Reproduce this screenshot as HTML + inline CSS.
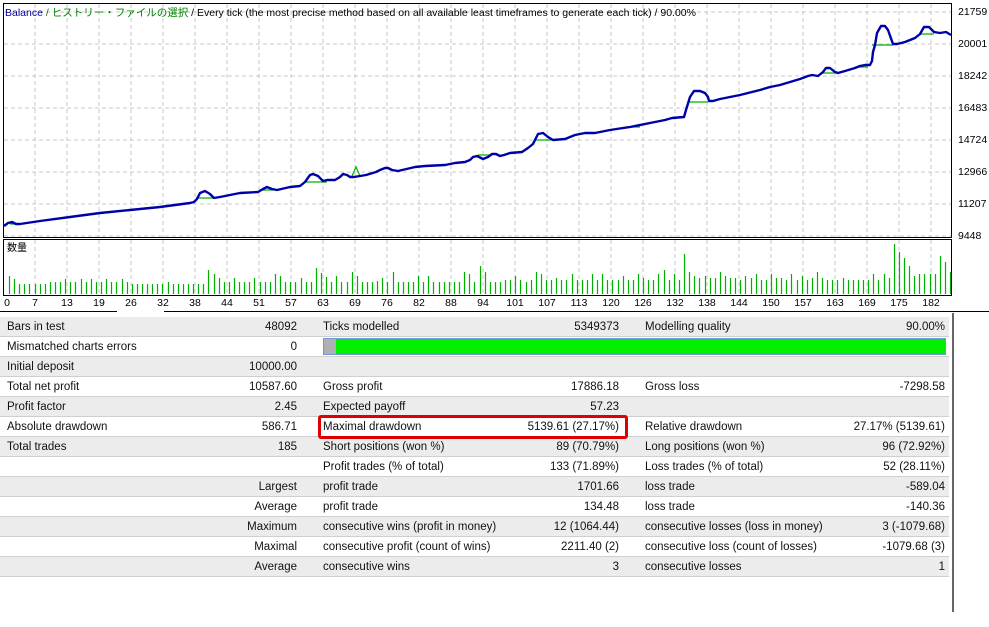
<!DOCTYPE html>
<html><head><meta charset="utf-8"><style>
body{margin:0;width:989px;height:627px;background:#fff;position:relative;overflow:hidden;font-family:"Liberation Sans","Noto Sans CJK JP",sans-serif;}
.t{position:absolute;left:0;top:317px;width:949px;}
.r{position:absolute;left:0;width:949px;height:19px;border-bottom:1px solid #cfcfcf;font-size:11.5px;line-height:20px;color:#111;}
.g{background:#ececec;}
.r span{position:absolute;white-space:nowrap;}
.l1{left:7px}.v1{right:652px}.l2{left:323px}.v2{right:330px}.l3{left:645px}.v3{right:4px}
</style></head><body>
<svg width="989" height="312" style="position:absolute;left:0;top:0" font-family="Liberation Sans, sans-serif">
<g id="grid" stroke="#c8c8c8" stroke-dasharray="4,3" stroke-width="1"></g>
<rect x="3.5" y="3.5" width="948" height="234" fill="none" stroke="#000"/>
<rect x="3.5" y="239.5" width="948" height="56" fill="none" stroke="#000"/>
<g id="vol" stroke="#00b000" stroke-width="1.2"></g>
<g stroke="#00b000" stroke-width="1.2" fill="none">
<path d="M196 198H214M262 190H275M305 182H327M352 176L356 167L360 176M478 155H491M535 140H553M688 102H708M822 73H838M872 45H893M920 34H934M10 224H20M855 67H868M625 127H640"/>
</g>
<polyline fill="none" stroke="#0000a8" stroke-width="2.4" stroke-linejoin="round" points="4,226 8,223 12,222 16,224 20,224 40,221 70,217 100,213 130,210 160,207 190,203 194,202 197,199 200,193 205,191 210,194 214,198 220,197 225,196 240,193 258,192 263,189 267,187 272,189 277,190 290,187 300,186 305,182 310,175 313,174 318,176 323,181 327,180 335,180 340,177 343,174 347,175 350,177 354,177 360,176 366,175 376,172 380,170 385,168 388,168 392,170 398,171 415,167 425,166 445,165 455,163 465,162 470,160 473,157 477,156 481,158 483,159 488,157 492,154 496,154 500,156 504,155 510,153 522,152 528,148 533,144 538,134 543,133 548,137 553,140 565,139 575,135 585,133 595,133 610,130 630,127 650,123 665,120 672,118 684,117 686,110 690,97 694,91 700,91 705,93 708,97 709,101 713,101 720,99 740,95 760,90 770,87 780,85 790,82 800,79 808,76 812,75 818,76 823,72 826,68 830,68 835,72 838,73 845,71 855,68 860,66 865,65 870,65 872,61 873,52 875,45 877,33 881,26 885,26 888,30 893,44 897,44 905,42 915,38 920,34 924,27 929,27 934,32 940,33 946,32 951,35"/>
<text x="5" y="16" font-size="10.5"><tspan fill="#0000a0">Balance</tspan><tspan fill="#008000"> / ヒストリー・ファイルの選択</tspan><tspan fill="#000"> / Every tick (the most precise method based on all available least timeframes to generate each tick) / 90.00%</tspan></text>
<g font-size="10.5" fill="#000">
<text x="958" y="15">21759</text><text x="958" y="47">20001</text><text x="958" y="79">18242</text><text x="958" y="111">16483</text><text x="958" y="143">14724</text><text x="958" y="175">12966</text><text x="958" y="207">11207</text><text x="958" y="239">9448</text>
</g>
<text x="7" y="251" font-size="10" fill="#000" font-family="Noto Sans CJK JP, sans-serif">数量</text>
<g id="xl" font-size="10.5" fill="#000" text-anchor="middle"></g>
<path d="M0 311.5H117M164 311.5H989" stroke="#000" stroke-width="1"/>
</svg>
<div style="position:absolute;left:952px;top:313px;width:2px;height:299px;background:#666"></div>
<div class="t">
<div class="r g" style="top:0"><span class="l1">Bars in test</span><span class="v1">48092</span><span class="l2">Ticks modelled</span><span class="v2">5349373</span><span class="l3">Modelling quality</span><span class="v3">90.00%</span></div>
<div class="r" style="top:20px"><span class="l1">Mismatched charts errors</span><span class="v1">0</span></div>
<div class="r g" style="top:40px"><span class="l1">Initial deposit</span><span class="v1">10000.00</span></div>
<div class="r" style="top:60px"><span class="l1">Total net profit</span><span class="v1">10587.60</span><span class="l2">Gross profit</span><span class="v2">17886.18</span><span class="l3">Gross loss</span><span class="v3">-7298.58</span></div>
<div class="r g" style="top:80px"><span class="l1">Profit factor</span><span class="v1">2.45</span><span class="l2">Expected payoff</span><span class="v2">57.23</span></div>
<div class="r" style="top:100px"><span class="l1">Absolute drawdown</span><span class="v1">586.71</span><span class="l2">Maximal drawdown</span><span class="v2">5139.61 (27.17%)</span><span class="l3">Relative drawdown</span><span class="v3">27.17% (5139.61)</span></div>
<div class="r g" style="top:120px"><span class="l1">Total trades</span><span class="v1">185</span><span class="l2">Short positions (won %)</span><span class="v2">89 (70.79%)</span><span class="l3">Long positions (won %)</span><span class="v3">96 (72.92%)</span></div>
<div class="r" style="top:140px"><span class="l2">Profit trades (% of total)</span><span class="v2">133 (71.89%)</span><span class="l3">Loss trades (% of total)</span><span class="v3">52 (28.11%)</span></div>
<div class="r g" style="top:160px"><span class="v1">Largest</span><span class="l2">profit trade</span><span class="v2">1701.66</span><span class="l3">loss trade</span><span class="v3">-589.04</span></div>
<div class="r" style="top:180px"><span class="v1">Average</span><span class="l2">profit trade</span><span class="v2">134.48</span><span class="l3">loss trade</span><span class="v3">-140.36</span></div>
<div class="r g" style="top:200px"><span class="v1">Maximum</span><span class="l2">consecutive wins (profit in money)</span><span class="v2">12 (1064.44)</span><span class="l3">consecutive losses (loss in money)</span><span class="v3">3 (-1079.68)</span></div>
<div class="r" style="top:220px"><span class="v1">Maximal</span><span class="l2">consecutive profit (count of wins)</span><span class="v2">2211.40 (2)</span><span class="l3">consecutive loss (count of losses)</span><span class="v3">-1079.68 (3)</span></div>
<div class="r g" style="top:240px"><span class="v1">Average</span><span class="l2">consecutive wins</span><span class="v2">3</span><span class="l3">consecutive losses</span><span class="v3">1</span></div>
</div>
<div style="position:absolute;left:323px;top:338px;width:621px;height:15px;border:1px solid #6a9ad8;background:#00ee00"><div style="width:12px;height:15px;background:#b0b0b0"></div></div>
<div style="position:absolute;left:318px;top:415px;width:304px;height:18px;border:3px solid #e00000;border-radius:3px"></div>
<script>
var ns="http://www.w3.org/2000/svg";
var g=document.getElementById("grid");
function L(p,x1,y1,x2,y2){var l=document.createElementNS(ns,"line");l.setAttribute("x1",x1);l.setAttribute("y1",y1);l.setAttribute("x2",x2);l.setAttribute("y2",y2);p.appendChild(l);}
for(var x=35;x<952;x+=32){L(g,x,4,x,237);L(g,x,240,x,295);}
for(var y=12;y<237;y+=32)L(g,4,y,951,y);
var v=document.getElementById("vol");
var h=[18,15,10,10,10,10,10,10,12,12,12,15,12,12,15,12,15,12,12,15,12,12,15,12,10,10,10,10,10,10,10,12,10,10,10,10,10,10,10,24,20,16,12,12,16,12,12,12,16,12,12,12,20,18,12,12,12,16,12,12,26,21,17,12,18,12,12,22,18,12,12,12,13,16,12,22,12,12,12,12,18,12,18,12,12,12,12,12,12,22,20,12,28,22,12,12,12,14,14,18,14,12,14,22,20,14,14,16,14,14,20,14,14,14,20,14,20,14,14,14,18,14,14,20,16,14,14,20,24,14,20,14,40,22,18,16,18,16,16,22,18,16,16,14,18,16,20,14,14,20,16,16,14,20,14,18,14,16,22,16,14,14,14,16,14,14,14,14,14,20,14,20,16,50,42,36,28,18,20,20,20,20,38,32,22,22,22,30,28];
h=h.slice(0,185);
var step=(950-9)/(h.length-1);
for(var i=0;i<h.length;i++){var x=Math.round(9+i*step)+0.5;L(v,x,294,x,294-h[i]);}
var xl=document.getElementById("xl");
var lab=[0,7,13,19,26,32,38,44,51,57,63,69,76,82,88,94,101,107,113,120,126,132,138,144,150,157,163,169,175,182];
for(var i=0;i<lab.length;i++){var t=document.createElementNS(ns,"text");t.setAttribute("x",i==0?7:3+32*i);t.setAttribute("y",306);t.textContent=lab[i];xl.appendChild(t);}
</script>
</body></html>
